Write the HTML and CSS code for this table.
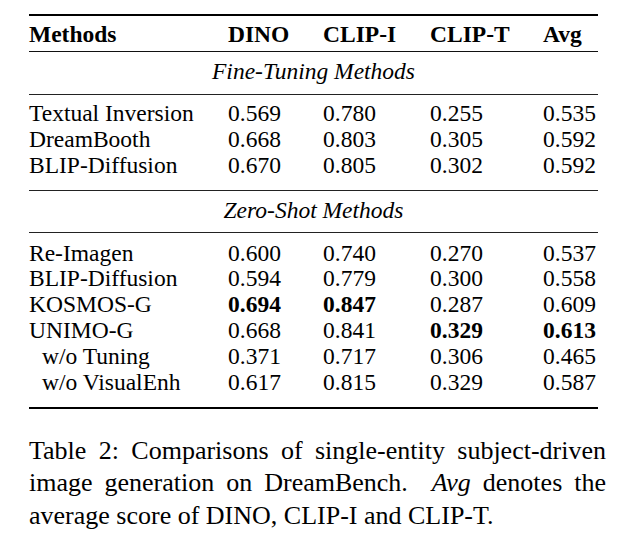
FILE: index.html
```html
<!DOCTYPE html>
<html lang="en">
<head>
<meta charset="utf-8">
<title>Table 2</title>
<link rel="stylesheet" href="styles.css">
</head>
<body>
<div class="page">
  <div class="table">
    <div class="row head">
      <span>Methods</span><span>DINO</span><span>CLIP-I</span><span>CLIP-T</span><span>Avg</span>
    </div>
    <div class="group-title">Fine-Tuning Methods</div>
    <div class="group group-first">
      <div class="row"><span>Textual Inversion</span><span>0.569</span><span>0.780</span><span>0.255</span><span>0.535</span></div>
      <div class="row"><span>DreamBooth</span><span>0.668</span><span>0.803</span><span>0.305</span><span>0.592</span></div>
      <div class="row"><span>BLIP-Diffusion</span><span>0.670</span><span>0.805</span><span>0.302</span><span>0.592</span></div>
    </div>
    <div class="group-title">Zero-Shot Methods</div>
    <div class="group group-last">
      <div class="row"><span>Re-Imagen</span><span>0.600</span><span>0.740</span><span>0.270</span><span>0.537</span></div>
      <div class="row"><span>BLIP-Diffusion</span><span>0.594</span><span>0.779</span><span>0.300</span><span>0.558</span></div>
      <div class="row"><span>KOSMOS-G</span><span class="best">0.694</span><span class="best">0.847</span><span>0.287</span><span>0.609</span></div>
      <div class="row"><span>UNIMO-G</span><span>0.668</span><span>0.841</span><span class="best">0.329</span><span class="best">0.613</span></div>
      <div class="row"><span class="sub">w/o Tuning</span><span>0.371</span><span>0.717</span><span>0.306</span><span>0.465</span></div>
      <div class="row"><span class="sub">w/o VisualEnh</span><span>0.617</span><span>0.815</span><span>0.329</span><span>0.587</span></div>
    </div>
  </div>
  <div class="caption">
    <span class="line full">Table 2: Comparisons of single-entity subject-driven</span>
    <span class="line full">image generation on DreamBench.&nbsp; <em>Avg</em> denotes the</span>
    <span class="line">average score of DINO, CLIP-I and CLIP-T.</span>
  </div>
</div>
</body>
</html>
```

FILE: styles.css
```css
html, body {
  margin: 0;
  padding: 0;
  background: #ffffff;
}

body {
  font-family: "Liberation Serif", "Times New Roman", serif;
  color: #000000;
}

.page {
  padding: 14px 13px 0 29px;
  width: 577px;
}

.table {
  width: 569px;
  border-top: 2px solid #000;
  border-bottom: 2px solid #000;
  font-size: 23.5px;
  line-height: 25.8px;
}

.row {
  display: grid;
  grid-template-columns: 199px 95px 107px 113px 55px;
  white-space: nowrap;
}

.head {
  font-weight: bold;
  padding: 5.7px 0 4px;
  border-bottom: 1px solid #111;
}

.group-title {
  font-style: italic;
  text-align: center;
  padding: 6.7px 0 9px;
  border-bottom: 1px solid #222;
}

.group-first {
  padding: 6.2px 0 11.4px;
  border-bottom: 1px solid #222;
}

.group-last {
  padding: 7.2px 0 11.5px;
}

.best {
  font-weight: bold;
}

.sub {
  padding-left: 13px;
}

.caption {
  margin-top: 26px;
  font-size: 26px;
  line-height: 32.5px;
}

.line {
  display: block;
  white-space: nowrap;
}

.line.full {
  text-align: justify;
  text-align-last: justify;
  white-space: normal;
}

.caption em {
  font-style: italic;
}
```
